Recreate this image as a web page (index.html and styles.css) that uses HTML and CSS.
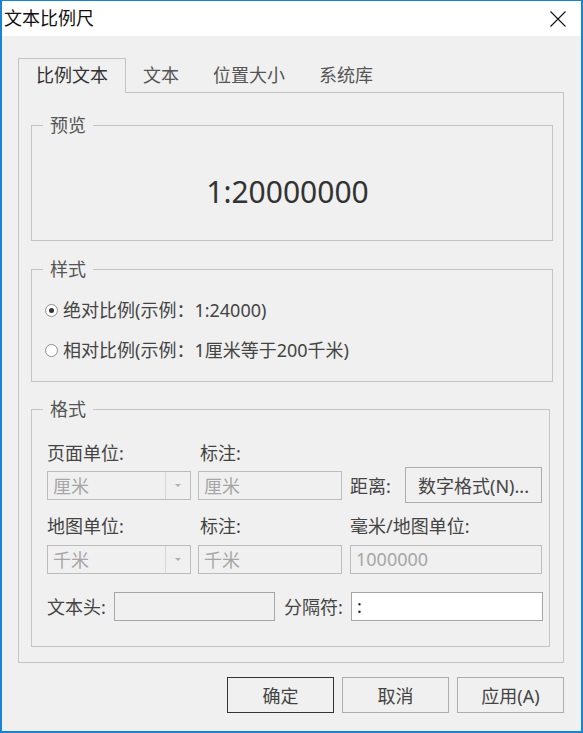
FILE: index.html
```html
<!DOCTYPE html>
<html lang="zh-CN">
<head>
    <meta charset="UTF-8">
    <title>文本比例尺</title>
    <link rel="stylesheet" href="styles.css">
</head>
<body>
    <div class="dialog">
        <div class="titlebar">
            <span class="title">文本比例尺</span>
            <svg class="close" width="16" height="16" viewBox="0 0 16 16">
                <path d="M0.5 0.5 L15.5 15.5 M15.5 0.5 L0.5 15.5" stroke="#111" stroke-width="1.1" fill="none"/>
            </svg>
        </div>

        <div class="content">
            <div class="tabs">
                <div class="tab active">比例文本</div>
                <div class="tab">文本</div>
                <div class="tab">位置大小</div>
                <div class="tab">系统库</div>
            </div>

            <div class="panel">
                <fieldset class="group">
                    <legend>预览</legend>
                    <div class="preview">1:20000000</div>
                </fieldset>

                <fieldset class="group group-style">
                    <legend>样式</legend>
                    <div class="options">
                        <div class="option"><span class="radio checked"></span>绝对比例(示例：1:24000)</div>
                        <div class="option"><span class="radio"></span>相对比例(示例：1厘米等于200千米)</div>
                    </div>
                </fieldset>

                <fieldset class="group group-format">
                    <legend>格式</legend>
                    <div class="format">
                        <div class="format-row labels-row">
                            <span>页面单位:</span>
                            <span class="indent">标注:</span>
                        </div>
                        <div class="format-row ctrl-row">
                            <div class="combo"><span>厘米</span><span class="combo-arrow"></span></div>
                            <input class="field" value="厘米" disabled>
                            <div class="distance">
                                <span>距离:</span>
                                <button class="btn btn-format">数字格式(N)...</button>
                            </div>
                        </div>
                        <div class="format-row labels-row second">
                            <span>地图单位:</span>
                            <span class="indent">标注:</span>
                            <span>毫米/地图单位:</span>
                        </div>
                        <div class="format-row ctrl-row second">
                            <div class="combo"><span>千米</span><span class="combo-arrow"></span></div>
                            <input class="field" value="千米" disabled>
                            <input class="field wide" value="1000000" disabled>
                        </div>
                        <div class="bottom-row">
                            <span class="head-label">文本头:</span>
                            <input class="field header">
                            <span class="sep-label">分隔符:</span>
                            <input class="field sep" value=":">
                        </div>
                    </div>
                </fieldset>
            </div>

            <div class="actions">
                <button class="btn btn-default">确定</button>
                <button class="btn">取消</button>
                <button class="btn">应用(A)</button>
            </div>
        </div>
    </div>
</body>
</html>
```

FILE: styles.css
```css
* {
    box-sizing: border-box;
}

body {
    margin: 0;
    font-family: "Noto Sans", "Noto Sans CJK SC", sans-serif;
    font-size: 18px;
    color: #444;
    background: #fff;
}

.dialog {
    width: 583px;
    height: 733px;
    border: 2px solid #1883d7;
    border-top-width: 1px;
    background: #f0f0f0;
    display: flex;
    flex-direction: column;
}

.titlebar {
    height: 35px;
    background: #fff;
    display: flex;
    align-items: center;
    justify-content: space-between;
    padding: 0 15px 0 2px;
}

.title {
    color: #111;
    line-height: 35px;
}

.content {
    padding: 22px 17px 0 16px;
}

/* tabs */
.tabs {
    display: flex;
    height: 35px;
    margin-bottom: -1px;
}

.tab {
    padding: 0 17px;
    line-height: 34px;
    color: #555;
}

.tab.active {
    height: 35px;
    line-height: 33px;
    border: 1px solid #c4c4c4;
    border-bottom: 0;
    background: #f0f0f0;
    color: #333;
    position: relative;
    z-index: 1;
}

.panel {
    border: 1px solid #c4c4c4;
    padding: 22px 10px 15px 12px;
}

/* group boxes */
.group {
    margin: 0;
    padding: 0 11px;
    border: 1px solid #c4c4c4;
    min-width: 0;
}

.group legend {
    padding: 0 7px;
    line-height: 20px;
    color: #555;
}

.group-style {
    margin-top: 18px;
}

.group-format {
    margin-top: 17px;
    margin-right: 3px;
    padding-right: 6px;
}

.preview {
    padding: 37px 9px 28px 0;
    font-size: 30px;
    line-height: 40px;
    text-align: center;
    color: #333;
}

.options {
    padding: 19px 0 19px 2px;
}

.option {
    display: flex;
    align-items: center;
    gap: 5px;
    height: 24px;
    line-height: 24px;
}

.option + .option {
    margin-top: 16px;
}

.radio {
    width: 13px;
    height: 13px;
    border: 1px solid #8f8f8f;
    border-radius: 50%;
    background: #fff;
    display: flex;
    align-items: center;
    justify-content: center;
}

.radio.checked::after {
    content: "";
    width: 5px;
    height: 5px;
    border-radius: 50%;
    background: #333;
}

/* format grid */
.format {
    padding: 22px 0 22px 4px;
}

.format-row {
    display: grid;
    grid-template-columns: 144px 145px 192px;
    column-gap: 7px;
    align-items: center;
}

.labels-row {
    height: 24px;
    line-height: 24px;
}

.labels-row.second {
    margin-top: 11px;
}

.indent {
    padding-left: 2px;
}

.ctrl-row {
    height: 36px;
    margin-top: 2px;
}

.ctrl-row.second {
    margin-top: 3px;
}

.combo {
    width: 144px;
    height: 29px;
    border: 1px solid #bcbcbc;
    display: flex;
    align-items: center;
    justify-content: space-between;
    padding-left: 5px;
    color: #a6a6a6;
}

.combo-arrow {
    width: 25px;
    height: 27px;
    border-left: 1px solid #d6d6d6;
    display: flex;
    align-items: center;
    justify-content: center;
}

.combo-arrow::after {
    content: "";
    border-left: 3px solid transparent;
    border-right: 3px solid transparent;
    border-top: 3px solid #b0b0b0;
}

.field {
    width: 144px;
    height: 29px;
    border: 1px solid #bcbcbc;
    background: #f0f0f0;
    font: inherit;
    color: #a6a6a6;
    padding: 0 5px;
    outline: none;
}

.field.wide {
    width: 192px;
}

.field.header {
    width: 161px;
    border-color: #a6a6a6;
}

.field.sep {
    width: 192px;
    margin-left: auto;
    border-color: #a6a6a6;
    background: #fff;
    color: #222;
}

.distance {
    display: flex;
    align-items: center;
    justify-content: space-between;
}

.bottom-row {
    display: flex;
    align-items: center;
    height: 36px;
    margin-top: 11px;
}

.head-label {
    width: 67px;
}

.sep-label {
    margin-left: 9px;
}

/* buttons */
.btn {
    height: 36px;
    border: 1px solid #adadad;
    background: #f0f0f0;
    font: inherit;
    color: #444;
    padding: 0;
}

.btn-format {
    width: 137px;
}

.actions {
    display: flex;
    justify-content: flex-end;
    gap: 8px;
    margin-top: 14px;
}

.actions .btn {
    width: 107px;
}

.actions .btn-default {
    border-color: #333;
}
```
